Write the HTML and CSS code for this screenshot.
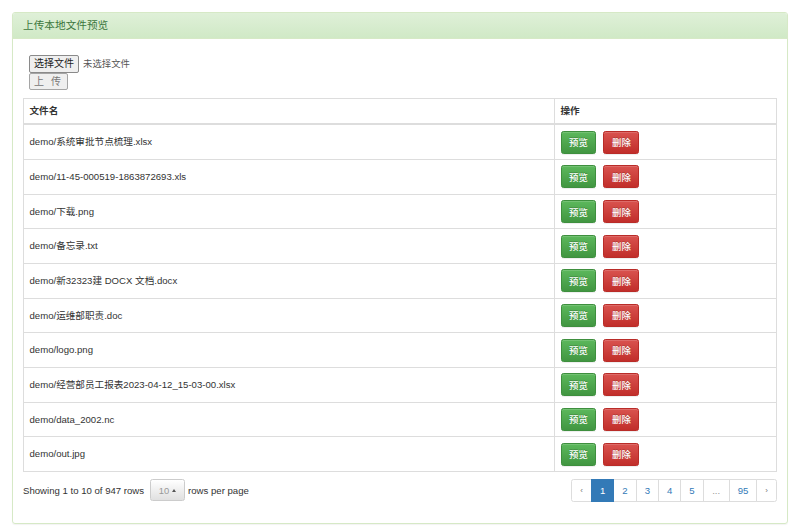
FILE: index.html
```html
<!DOCTYPE html>
<html lang="zh-CN">
<head>
<meta charset="utf-8">
<title>上传本地文件预览</title>
<link rel="stylesheet" href="styles.css">
</head>
<body>
<div class="panel">
  <div class="panel-heading"><h3 class="panel-title">上传本地文件预览</h3></div>
  <div class="panel-body">
    <form class="upload">
      <div class="file-row"><button type="button" class="file-btn">选择文件</button><span class="file-name">未选择文件</span></div>
      <button type="button" class="upload-btn">上 传</button>
    </form>
    <table class="table">
      <thead>
        <tr><th class="col-name">文件名</th><th>操作</th></tr>
      </thead>
      <tbody>
        <tr><td>demo/系统审批节点梳理.xlsx</td><td><div class="ops"><button class="btn btn-success">预览</button><button class="btn btn-danger">删除</button></div></td></tr>
        <tr><td>demo/11-45-000519-1863872693.xls</td><td><div class="ops"><button class="btn btn-success">预览</button><button class="btn btn-danger">删除</button></div></td></tr>
        <tr><td>demo/下载.png</td><td><div class="ops"><button class="btn btn-success">预览</button><button class="btn btn-danger">删除</button></div></td></tr>
        <tr><td>demo/备忘录.txt</td><td><div class="ops"><button class="btn btn-success">预览</button><button class="btn btn-danger">删除</button></div></td></tr>
        <tr><td>demo/新32323建 DOCX 文档.docx</td><td><div class="ops"><button class="btn btn-success">预览</button><button class="btn btn-danger">删除</button></div></td></tr>
        <tr><td>demo/运维部职责.doc</td><td><div class="ops"><button class="btn btn-success">预览</button><button class="btn btn-danger">删除</button></div></td></tr>
        <tr><td>demo/logo.png</td><td><div class="ops"><button class="btn btn-success">预览</button><button class="btn btn-danger">删除</button></div></td></tr>
        <tr><td>demo/经营部员工报表2023-04-12_15-03-00.xlsx</td><td><div class="ops"><button class="btn btn-success">预览</button><button class="btn btn-danger">删除</button></div></td></tr>
        <tr><td>demo/data_2002.nc</td><td><div class="ops"><button class="btn btn-success">预览</button><button class="btn btn-danger">删除</button></div></td></tr>
        <tr><td>demo/out.jpg</td><td><div class="ops"><button class="btn btn-success">预览</button><button class="btn btn-danger">删除</button></div></td></tr>
      </tbody>
    </table>
    <div class="table-footer">
      <div class="page-info">
        <span>Showing 1 to 10 of 947 rows</span>
        <button class="page-size">10 <span class="caret"></span></button>
        <span>rows per page</span>
      </div>
      <ul class="pagination">
        <li class="page-pre"><a>‹</a></li>
        <li class="active"><a>1</a></li>
        <li><a>2</a></li>
        <li><a>3</a></li>
        <li><a>4</a></li>
        <li><a>5</a></li>
        <li class="sep"><a>...</a></li>
        <li><a>95</a></li>
        <li class="page-next"><a>›</a></li>
      </ul>
    </div>
  </div>
</div>
</body>
</html>
```
FILE: styles.css
```css
* { box-sizing: border-box; }
html, body { margin: 0; background: #fff; }
body {
  padding: 12px;
  font-family: "Liberation Sans", Arial, "Noto Sans CJK SC", sans-serif;
  font-size: 9.6px;
  line-height: 1.42857;
  color: #333;
}
.panel {
  width: 776px;
  border: 1px solid #d6e9c6;
  border-radius: 3px;
  box-shadow: 0 1px 1px rgba(0,0,0,.05);
}
.panel-heading {
  height: 26px;
  padding: 0 10px;
  background: linear-gradient(#dff0d8, #d0e9c6);
  border-bottom: 1px solid #d6e9c6;
  border-radius: 2px 2px 0 0;
  display: flex;
  align-items: center;
}
.panel-title {
  margin: 0;
  font-size: 10.67px;
  font-weight: normal;
  color: #3c763d;
}
.panel-body {
  padding: 16px 10px 21px;
}
.upload {
  margin: 0 0 8px 6px;
  display: flex;
  flex-direction: column;
  align-items: flex-start;
}
.file-row { display: flex; align-items: center; height: 18px; }
.file-btn, .upload-btn {
  font-family: inherit;
  font-size: 10px;
  color: #222;
  background: #efefef;
  border: 1px solid #8a8a8a;
  border-radius: 2px;
  padding: 0 4px;
  height: 18px;
  line-height: 16px;
}
.file-name { margin-left: 4px; font-size: 9.4px; color: #555; }
.upload-btn {
  height: 17px;
  width: 39px;
  color: #777;
  border-color: #a5a5a5;
  letter-spacing: 2px;
}
.table {
  width: 754px;
  border-collapse: collapse;
  border: 1px solid #ddd;
}
.table th, .table td {
  border: 1px solid #ddd;
  text-align: left;
  vertical-align: middle;
  padding: 5.33px 5.5px;
}
.table th {
  font-weight: bold;
  border-bottom: 2px solid #ddd;
  height: 25px;
}
.col-name { width: 531px; }
.table td { height: 34.4px; }
.ops { display: flex; gap: 7px; }
.btn {
  font-family: inherit;
  font-size: 9.4px;
  font-weight: 500;
  color: #fff;
  height: 23px;
  padding: 0 7.6px;
  white-space: nowrap;
  border-radius: 2.5px;
  border: 1px solid;
  text-shadow: 0 -1px 0 rgba(0,0,0,.2);
  box-shadow: inset 0 1px 0 rgba(255,255,255,.15), 0 1px 1px rgba(0,0,0,.075);
}
.btn-success {
  background: linear-gradient(#5cb85c, #419641);
  border-color: #3e8f3e;
}
.btn-danger {
  background: linear-gradient(#d9534f, #c12e2a);
  border-color: #b92c28;
}
.table-footer {
  display: flex;
  justify-content: space-between;
  align-items: center;
  margin-top: 7px;
}
.page-info { display: flex; align-items: center; }
.page-size {
  margin: 0 3px 0 6px;
  height: 22px;
  width: 35px;
  font-family: inherit;
  font-size: 9.4px;
  color: #999;
  background: linear-gradient(#fff, #e0e0e0);
  border: 1px solid #ccc;
  border-radius: 2.5px;
  display: flex;
  align-items: center;
  justify-content: center;
  gap: 3px;
  padding: 0;
}
.caret {
  width: 0; height: 0;
  border-left: 2.5px solid transparent;
  border-right: 2.5px solid transparent;
  border-bottom: 3px solid #555;
}
.pagination {
  list-style: none;
  margin: 0;
  padding: 0;
  display: flex;
}
.pagination li a {
  display: block;
  height: 23px;
  line-height: 21px;
  padding: 0 8px;
  margin-left: -1px;
  border: 1px solid #ddd;
  color: #337ab7;
  background: #fff;
}
.pagination li:first-child a { margin-left: 0; border-radius: 2.5px 0 0 2.5px; }
.pagination li:last-child a { border-radius: 0 2.5px 2.5px 0; }
.pagination .page-pre a, .pagination .page-next a { font-size: 8px; padding: 0 8px; color: #777; }
.pagination .sep a { color: #999; padding: 0 8.5px; }
.pagination .active a {
  background: #337ab7;
  border-color: #337ab7;
  color: #fff;
  position: relative;
  z-index: 1;
}
```
